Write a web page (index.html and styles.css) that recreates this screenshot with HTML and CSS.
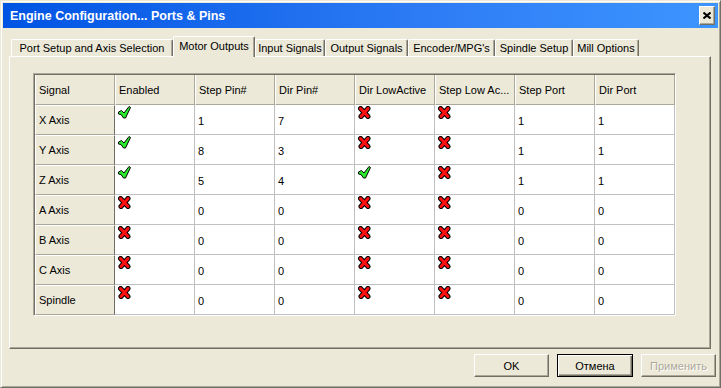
FILE: index.html
```html
<!DOCTYPE html>
<html lang="en">
<head>
    <meta charset="UTF-8">
    <title>Engine Configuration... Ports &amp; Pins</title>
    <link rel="stylesheet" href="styles.css">
</head>
<body>
    <!-- shared icons -->
    <svg class="defs" width="0" height="0">
        <symbol id="ico-on" viewBox="0 0 13 13">
            <path d="M0.5 6 L3.5 4.5 L6 7 L11 0.5 L12.5 1.5 L7.5 12 L5.5 12 L3 8.5 L0.5 8 Z" fill="#2bea2b" stroke="#000" stroke-width="1" stroke-linejoin="round"/>
        </symbol>
        <symbol id="ico-off" viewBox="0 0 13 13">
            <path d="M2.5 2.5 L10 10.5 M10 2.5 L3 10.5" stroke="#000" stroke-width="5" stroke-linecap="round"/>
            <path d="M2.5 2.5 L10 10.5 M10 2.5 L3 10.5" stroke="#ff1010" stroke-width="3" stroke-linecap="round"/>
        </symbol>
    </svg>

    <div class="window">
        <!-- Title Bar -->
        <div class="titlebar">
            <span class="title">Engine Configuration... Ports &amp; Pins</span>
            <button class="close-btn">
                <svg width="8" height="7" viewBox="0 0 8 7"><path d="M0.5 0.5 L7.5 6.5 M7.5 0.5 L0.5 6.5" stroke="#000" stroke-width="2"/></svg>
            </button>
        </div>

        <!-- Tabs -->
        <div class="tabs">
            <div class="tab tab-port">Port Setup and Axis Selection</div>
            <div class="tab tab-motor active">Motor Outputs</div>
            <div class="tab tab-input">Input Signals</div>
            <div class="tab tab-output">Output Signals</div>
            <div class="tab tab-encoder">Encoder/MPG's</div>
            <div class="tab tab-spindle">Spindle Setup</div>
            <div class="tab tab-mill">Mill Options</div>
        </div>

        <!-- Motor Outputs Panel -->
        <div class="panel">
            <div class="grid">
                <div class="head">Signal</div>
                <div class="head">Enabled</div>
                <div class="head">Step Pin#</div>
                <div class="head">Dir Pin#</div>
                <div class="head">Dir LowActive</div>
                <div class="head">Step Low Ac...</div>
                <div class="head">Step Port</div>
                <div class="head">Dir Port</div>

                <div class="row-head">X Axis</div>
                <div class="cell icon"><svg><use href="#ico-on"/></svg></div>
                <div class="cell">1</div>
                <div class="cell">7</div>
                <div class="cell icon"><svg><use href="#ico-off"/></svg></div>
                <div class="cell icon"><svg><use href="#ico-off"/></svg></div>
                <div class="cell">1</div>
                <div class="cell">1</div>

                <div class="row-head">Y Axis</div>
                <div class="cell icon"><svg><use href="#ico-on"/></svg></div>
                <div class="cell">8</div>
                <div class="cell">3</div>
                <div class="cell icon"><svg><use href="#ico-off"/></svg></div>
                <div class="cell icon"><svg><use href="#ico-off"/></svg></div>
                <div class="cell">1</div>
                <div class="cell">1</div>

                <div class="row-head">Z Axis</div>
                <div class="cell icon"><svg><use href="#ico-on"/></svg></div>
                <div class="cell">5</div>
                <div class="cell">4</div>
                <div class="cell icon"><svg><use href="#ico-on"/></svg></div>
                <div class="cell icon"><svg><use href="#ico-off"/></svg></div>
                <div class="cell">1</div>
                <div class="cell">1</div>

                <div class="row-head">A Axis</div>
                <div class="cell icon"><svg><use href="#ico-off"/></svg></div>
                <div class="cell">0</div>
                <div class="cell">0</div>
                <div class="cell icon"><svg><use href="#ico-off"/></svg></div>
                <div class="cell icon"><svg><use href="#ico-off"/></svg></div>
                <div class="cell">0</div>
                <div class="cell">0</div>

                <div class="row-head">B Axis</div>
                <div class="cell icon"><svg><use href="#ico-off"/></svg></div>
                <div class="cell">0</div>
                <div class="cell">0</div>
                <div class="cell icon"><svg><use href="#ico-off"/></svg></div>
                <div class="cell icon"><svg><use href="#ico-off"/></svg></div>
                <div class="cell">0</div>
                <div class="cell">0</div>

                <div class="row-head">C Axis</div>
                <div class="cell icon"><svg><use href="#ico-off"/></svg></div>
                <div class="cell">0</div>
                <div class="cell">0</div>
                <div class="cell icon"><svg><use href="#ico-off"/></svg></div>
                <div class="cell icon"><svg><use href="#ico-off"/></svg></div>
                <div class="cell">0</div>
                <div class="cell">0</div>

                <div class="row-head">Spindle</div>
                <div class="cell icon"><svg><use href="#ico-off"/></svg></div>
                <div class="cell">0</div>
                <div class="cell">0</div>
                <div class="cell icon"><svg><use href="#ico-off"/></svg></div>
                <div class="cell icon"><svg><use href="#ico-off"/></svg></div>
                <div class="cell">0</div>
                <div class="cell">0</div>
            </div>
        </div>

        <!-- Dialog Buttons -->
        <div class="buttons">
            <button class="btn">OK</button>
            <button class="btn default">Отмена</button>
            <button class="btn" disabled>Применить</button>
        </div>
    </div>
</body>
</html>
```

FILE: styles.css
```css
/* General Styles */
* {
    box-sizing: border-box;
}

body {
    margin: 0;
    background: #ece9d8;
    font-family: 'Liberation Sans', Arial, sans-serif;
    font-size: 11px;
    color: #000;
}

.defs {
    position: absolute;
}

/* Window Frame */
.window {
    width: 721px;
    height: 388px;
    border: 1px solid;
    border-color: #ece9d8 #716f64 #716f64 #ece9d8;
    box-shadow: inset 1px 1px #fff, inset -1px -1px #aca899;
    padding: 2px;
    display: flex;
    flex-direction: column;
}

/* Title Bar */
.titlebar {
    height: 25px;
    background: linear-gradient(to right, #0054e3, #2e7cf5 60%, #3d95ff);
    display: flex;
    align-items: center;
    justify-content: space-between;
    padding: 0 3px 0 7px;
}

.title {
    color: #fff;
    font-weight: bold;
    font-size: 12.5px;
}

.close-btn {
    width: 16px;
    height: 19px;
    padding: 0;
    background: #ece9d8;
    border: 1px solid;
    border-color: #fff #716f64 #716f64 #fff;
    box-shadow: inset -1px -1px #aca899;
    display: flex;
    align-items: center;
    justify-content: center;
}

/* Tabs */
.tabs {
    display: flex;
    align-items: flex-end;
    height: 20px;
    margin-top: 8px;
    padding-left: 8px;
}

.tab {
    height: 17px;
    border: 1px solid;
    border-bottom: none;
    border-color: #fff #716f64 transparent #fff;
    box-shadow: inset -1px 0 #aca899;
    border-radius: 2px 2px 0 0;
    display: flex;
    align-items: center;
    justify-content: center;
    white-space: nowrap;
}

.tab.active {
    height: 21px;
    margin-bottom: -1px;
    background: #ece9d8;
    position: relative;
    z-index: 1;
    padding-bottom: 2px;
}

.tab-port { width: 162px; }
.tab-motor { width: 82px; }
.tab-input { width: 70px; }
.tab-output { width: 83px; }
.tab-encoder { width: 87px; }
.tab-spindle { width: 78px; }
.tab-mill { width: 66px; }

/* Panel */
.panel {
    height: 293px;
    margin: 0 7px 0 6px;
    border: 1px solid;
    border-color: #fff #716f64 #716f64 #fff;
    box-shadow: inset -1px -1px #aca899;
    padding: 16px 0 0 23px;
}

/* Signal Grid */
.grid {
    display: grid;
    grid-template-columns: repeat(8, 80px);
    grid-auto-rows: 30px;
    width: 643px;
    border: 1px solid;
    border-color: #aca899 #fff #fff #aca899;
    box-shadow: inset 1px 1px #716f64;
    padding: 1px 0 0 1px;
    background: #fff;
}

.head,
.row-head,
.cell {
    display: flex;
    align-items: center;
    padding-left: 3px;
    white-space: nowrap;
    overflow: hidden;
}

.head {
    background: #ece9d8;
    border-left: 1px solid #fff;
    border-right: 1px solid #aca899;
    border-bottom: 1px solid #aca899;
}

.row-head {
    background: #ece9d8;
    border-top: 1px solid #fff;
    border-left: 1px solid #fff;
    border-right: 1px solid #716f64;
    border-bottom: 1px solid #aca899;
}

.cell {
    border-right: 1px solid #c0c0c0;
    border-bottom: 1px solid #c0c0c0;
    padding-top: 3px;
}

.cell.icon {
    align-items: flex-start;
    padding: 1px 0 0 3px;
}

.cell.icon svg {
    width: 13px;
    height: 13px;
}

/* Dialog Buttons */
.buttons {
    display: flex;
    justify-content: flex-end;
    gap: 8px;
    margin-top: 5px;
    padding-right: 2px;
}

.btn {
    width: 75px;
    height: 23px;
    font: inherit;
    color: #000;
    background: #ece9d8;
    border: 1px solid;
    border-color: #fff #716f64 #716f64 #fff;
    box-shadow: inset -1px -1px #aca899;
    padding: 0;
}

.btn.default {
    width: 76px;
    border-color: #000;
    box-shadow: inset 1px 1px #fff, inset -1px -1px #716f64, inset -2px -2px #aca899;
}

.btn:disabled {
    color: #aca899;
    text-shadow: 1px 1px #fff;
}
```
